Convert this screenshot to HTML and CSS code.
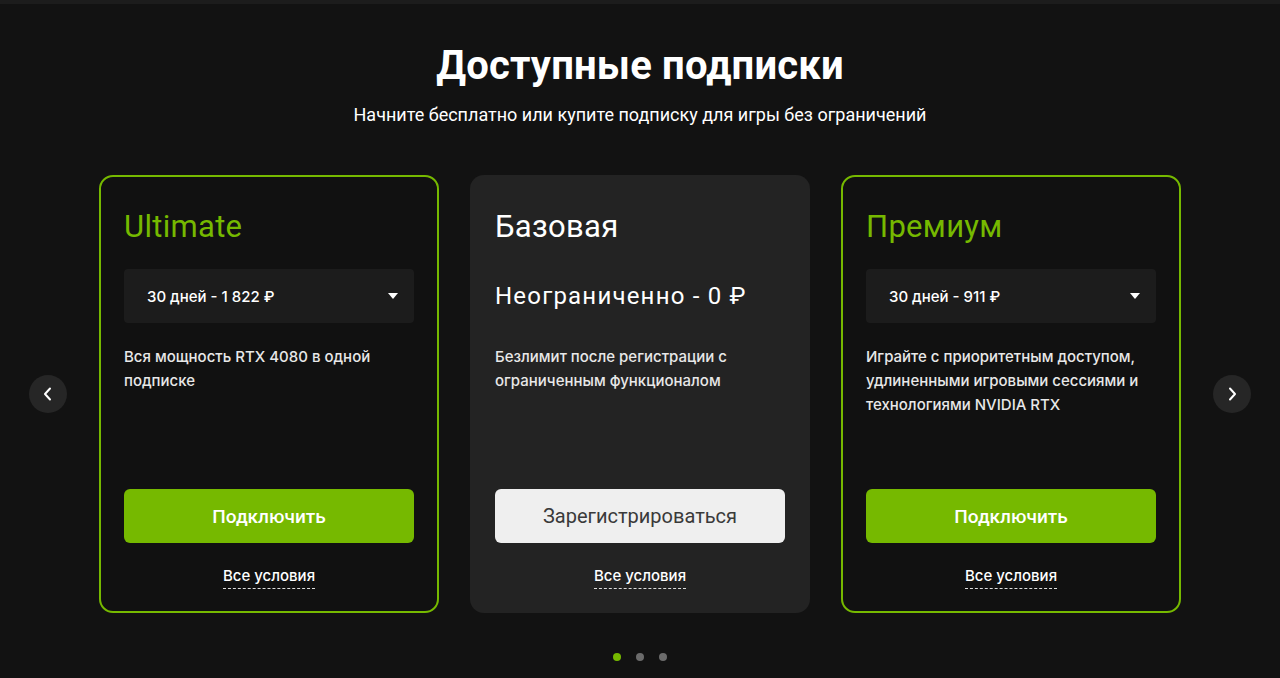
FILE: index.html
```html
<!DOCTYPE html>
<html lang="ru">
<head>
    <meta charset="UTF-8">
    <meta name="viewport" content="width=device-width, initial-scale=1.0">
    <title>Доступные подписки</title>
    <link rel="stylesheet" href="styles.css">
</head>
<body>
    <div class="topbar"></div>
    <section class="plans">
        <h1 class="plans-title">Доступные подписки</h1>
        <p class="plans-sub">Начните бесплатно или купите подписку для игры без ограничений</p>

        <div class="carousel">
            <button class="nav-btn" aria-label="Назад">
                <svg width="12" height="14" viewBox="0 0 12 14"><path d="M8 1.5 3 7l5 5.5" fill="none" stroke="#fff" stroke-width="2" stroke-linecap="round" stroke-linejoin="round"/></svg>
            </button>

            <div class="cards">
                <div class="card card-accent">
                    <h2 class="card-title green">Ultimate</h2>
                    <div class="select">
                        <span>30 дней - 1 822 ₽</span>
                        <span class="caret"></span>
                    </div>
                    <p class="card-desc">Вся мощность RTX 4080 в одной подписке</p>
                    <button class="btn btn-green">Подключить</button>
                    <a href="#" class="terms">Все условия</a>
                </div>

                <div class="card card-plain">
                    <h2 class="card-title">Базовая</h2>
                    <div class="price">Неограниченно - 0 ₽</div>
                    <p class="card-desc">Безлимит после регистрации с ограниченным функционалом</p>
                    <button class="btn btn-light">Зарегистрироваться</button>
                    <a href="#" class="terms">Все условия</a>
                </div>

                <div class="card card-accent">
                    <h2 class="card-title green">Премиум</h2>
                    <div class="select">
                        <span>30 дней - 911 ₽</span>
                        <span class="caret"></span>
                    </div>
                    <p class="card-desc">Играйте с приоритетным доступом, удлиненными игровыми сессиями и технологиями NVIDIA RTX</p>
                    <button class="btn btn-green">Подключить</button>
                    <a href="#" class="terms">Все условия</a>
                </div>
            </div>

            <button class="nav-btn" aria-label="Вперёд">
                <svg width="12" height="14" viewBox="0 0 12 14"><path d="M4 1.5 9 7l-5 5.5" fill="none" stroke="#fff" stroke-width="2" stroke-linecap="round" stroke-linejoin="round"/></svg>
            </button>
        </div>

        <div class="dots">
            <span class="dot active"></span>
            <span class="dot"></span>
            <span class="dot"></span>
        </div>
    </section>
</body>
</html>
```

FILE: styles.css
```css
body {
    margin: 0;
    padding: 0;
    background-color: #121212;
    color: #fff;
    font-family: Roboto, "Noto Sans", sans-serif;
}
.topbar {
    height: 4px;
    background-color: #1c1c1c;
}
.plans {
    padding-top: 40px;
}
.plans-title {
    margin: 0;
    text-align: center;
    font-size: 40px;
    line-height: 44px;
    font-weight: 700;
    letter-spacing: 0.2px;
}
.plans-sub {
    margin: 16px 0 0;
    text-align: center;
    font-size: 18px;
    line-height: 22px;
}
.carousel {
    margin-top: 49px;
    display: flex;
    align-items: center;
    justify-content: center;
    gap: 32px;
}
.nav-btn {
    width: 38px;
    height: 38px;
    border: none;
    border-radius: 50%;
    background-color: #262626;
    display: flex;
    align-items: center;
    justify-content: center;
    padding: 0;
    cursor: pointer;
}
.cards {
    width: 1082px;
    display: grid;
    grid-template-columns: repeat(3, 1fr);
    gap: 31px;
}
.card {
    height: 438px;
    box-sizing: border-box;
    border: 2px solid transparent;
    border-radius: 14px;
    padding: 32px 23px 22px;
    display: flex;
    flex-direction: column;
}
.card-accent {
    border-color: #76b900;
    background-color: #111;
}
.card-plain {
    background-color: #232323;
}
.card-title {
    margin: 0;
    font-size: 31px;
    line-height: 36px;
    font-weight: 400;
    letter-spacing: 0.3px;
    color: #fff;
}
.card-title.green {
    color: #76b900;
}
.select {
    margin-top: 24px;
    height: 54px;
    background-color: #1c1c1c;
    border-radius: 4px;
    display: flex;
    align-items: center;
    justify-content: space-between;
    padding: 0 16px 0 23px;
    font-family: Inter, sans-serif;
    font-size: 15px;
    font-weight: 500;
}
.caret {
    width: 0;
    height: 0;
    border-left: 5px solid transparent;
    border-right: 5px solid transparent;
    border-top: 6px solid #fff;
}
.price {
    margin-top: 24px;
    height: 54px;
    display: flex;
    align-items: center;
    font-size: 24px;
    letter-spacing: 1.2px;
}
.card-desc {
    margin: 22px 0 0;
    font-family: Inter, sans-serif;
    font-size: 15px;
    line-height: 24px;
    font-weight: 500;
    color: #e8e8e8;
}
.btn {
    margin-top: auto;
    height: 54px;
    border: none;
    border-radius: 6px;
    font-family: Roboto, sans-serif;
    font-size: 19px;
    font-weight: 500;
    cursor: pointer;
}
.btn-green {
    background-color: #76b900;
    color: #fff;
}
.btn-light {
    background-color: #efefef;
    color: #3a3a3a;
    font-size: 20px;
    font-weight: 400;
}
.terms {
    align-self: center;
    margin-top: 23px;
    padding-bottom: 2px;
    font-family: Inter, sans-serif;
    font-size: 15px;
    line-height: 20px;
    font-weight: 500;
    color: #fff;
    text-decoration: none;
    border-bottom: 1px dashed #ddd;
}
.dots {
    margin-top: 40px;
    display: flex;
    justify-content: center;
    gap: 15px;
}
.dot {
    width: 8px;
    height: 8px;
    border-radius: 50%;
    background-color: #6b6b6b;
}
.dot.active {
    background-color: #76b900;
}
```
